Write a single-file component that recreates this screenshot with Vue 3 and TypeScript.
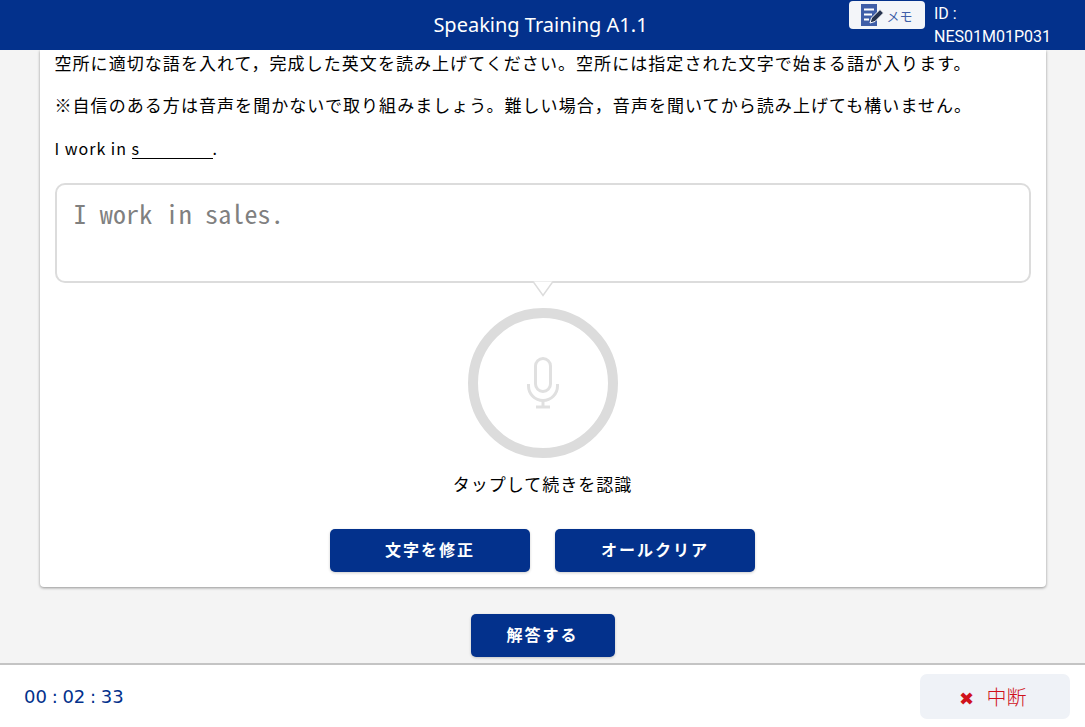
<script setup lang="ts">
import { ref } from "vue";

const title = ref("Speaking Training A1.1");
const userId = ref("NES01M01P031");
const recognized = ref("I work in sales.");
const elapsed = ref("00 : 02 : 33");
</script>

<template>
  <div class="page">
    <header class="top-bar">
      <h1 class="title">{{ title }}</h1>
      <div class="top-right">
        <button class="memo-btn">
          <svg class="memo-icon" width="23" height="22" viewBox="0 0 23 22">
            <rect x="0" y="0" width="16" height="22" fill="#3f5ea8" />
            <path d="M3 5.500h10M3 10.500h8M3 15.500h5" stroke="#fff" stroke-width="2" fill="none" />
            <path d="M9 19l1.500-5 8.500-8.500 3.500 3.500-8.500 8.500z" fill="#26334f" stroke="#fff" stroke-width="1" />
          </svg>
          <span>メモ</span>
        </button>
        <div class="user-id">ID :<br />{{ userId }}</div>
      </div>
    </header>

    <main class="content">
      <section class="card">
        <p class="lead">空所に適切な語を入れて，完成した英文を読み上げてください。空所には指定された文字で始まる語が入ります。</p>
        <p class="lead">※自信のある方は音声を聞かないで取り組みましょう。難しい場合，音声を聞いてから読み上げても構いません。</p>
        <p class="lead sentence">I work in <span class="blank">s</span>.</p>

        <div class="speech-box">
          <span class="speech-text">{{ recognized }}</span>
          <svg class="speech-tail" width="20" height="17" viewBox="0 0 20 17">
            <path d="M0 1.500L10 15.500L20 1.500" fill="#fff" stroke="#dcdcdc" stroke-width="1.500" />
          </svg>
        </div>

        <div class="mic-circle">
          <svg width="32" height="52" viewBox="0 0 32 52" fill="none" stroke="#e0e0e0" stroke-width="3">
            <rect x="8.500" y="1.500" width="15" height="33" rx="7.500" />
            <path d="M1.500 27v2a14.500 14.500 0 0 0 29 0v-2" />
            <path d="M16 43v6" />
            <path d="M9 50h14" />
          </svg>
        </div>
        <p class="mic-label">タップして続きを認識</p>

        <div class="card-actions">
          <button class="primary-btn wide">文字を修正</button>
          <button class="primary-btn wide">オールクリア</button>
        </div>
      </section>

      <div class="answer-row">
        <button class="primary-btn answer">解答する</button>
      </div>
    </main>

    <footer class="bottom-bar">
      <span class="timer">{{ elapsed }}</span>
      <button class="stop-btn"><span class="stop-x">✖</span>中断</button>
    </footer>
  </div>
</template>

<style>
html,
body {
  margin: 0;
  background: #fff;
}
</style>

<style scoped>
.page {
  width: 1085px;
  height: 727px;
  display: flex;
  flex-direction: column;
  overflow: hidden;
  font-family: "Noto Sans CJK JP", "Noto Sans", sans-serif;
  color: #000;
}

.top-bar {
  height: 50px;
  flex: none;
  background: #03318c;
  color: #fff;
  position: relative;
  display: flex;
  align-items: center;
  justify-content: center;
}

.title {
  margin: 0;
  padding: 0 4px 2px 0;
  font-family: "Noto Sans", sans-serif;
  font-size: 20px;
  font-weight: 400;
}

.top-right {
  position: absolute;
  left: 849px;
  top: 0;
  display: flex;
  gap: 9px;
}

.memo-btn {
  width: 76px;
  height: 28px;
  margin-top: 1px;
  padding: 0;
  border: none;
  border-radius: 4px;
  background: #f3f5f9;
  color: #3f5ea8;
  font: 400 13px "Noto Sans CJK JP", sans-serif;
  display: flex;
  align-items: center;
  justify-content: center;
  gap: 2px;
}

.user-id {
  font-family: "Roboto", sans-serif;
  font-size: 16px;
  line-height: 23px;
  margin-top: 2px;
}

.content {
  flex: 1;
  background: #f4f4f4;
  display: flex;
  flex-direction: column;
  align-items: center;
}

.card {
  width: 976px;
  height: 537px;
  padding: 0 15px;
  background: #fff;
  border-radius: 0 0 4px 4px;
  box-shadow: 0 1px 3px rgba(0, 0, 0, 0.4);
}

.lead {
  margin: 0 0 18px;
  padding-top: 2px;
  font-size: 17px;
  line-height: 22px;
  letter-spacing: 1.060px;
}

.sentence {
  margin-bottom: 24px;
  padding-top: 3px;
  font-size: 16px;
  letter-spacing: 1px;
}

.blank {
  display: inline-block;
  width: 81px;
  border-bottom: 1px solid #000;
  line-height: 19px;
}

.speech-box {
  height: 96px;
  border: 2px solid #dcdcdc;
  border-radius: 10px;
  position: relative;
  padding: 0 17px;
}

.speech-text {
  font-family: "Noto Sans Mono CJK JP", "DejaVu Sans Mono", monospace;
  font-size: 26px;
  font-weight: 300;
  letter-spacing: 0.150px;
  line-height: 56px;
  color: #808080;
}

.speech-tail {
  position: absolute;
  left: 476px;
  bottom: -16px;
}

.mic-circle {
  width: 130px;
  height: 130px;
  margin: 25px auto 0;
  border: 10px solid #dcdcdc;
  border-radius: 50%;
  display: flex;
  align-items: center;
  justify-content: center;
}

.mic-label {
  margin: 15px 0 0;
  text-align: center;
  font-size: 17px;
  line-height: 22px;
  letter-spacing: 1px;
}

.card-actions {
  display: flex;
  justify-content: center;
  gap: 25px;
  margin-top: 34px;
}

.primary-btn {
  height: 43px;
  padding: 0 0 3px;
  border: none;
  border-radius: 5px;
  background: #03318c;
  color: #fff;
  font: 700 16px "Noto Sans CJK JP", sans-serif;
  letter-spacing: 2px;
  box-shadow: 0 1px 3px rgba(0, 0, 0, 0.2);
}

.wide {
  width: 200px;
}

.answer {
  width: 144px;
}

.answer-row {
  margin-top: 27px;
}

.bottom-bar {
  height: 64px;
  box-sizing: border-box;
  flex: none;
  border-top: 2px solid #c4c4c4;
  background: #fff;
  display: flex;
  align-items: flex-start;
  justify-content: space-between;
  padding: 9px 15px 0 24px;
}

.timer {
  color: #03318c;
  font-family: "DejaVu Sans", sans-serif;
  font-size: 18px;
  word-spacing: -1px;
  line-height: 46px;
}

.stop-btn {
  width: 150px;
  height: 45px;
  padding: 0 5px 0 0;
  border: none;
  border-radius: 7px;
  background: #eff2f7;
  color: #d0121b;
  font: 300 20px "Noto Sans CJK JP", sans-serif;
}

.stop-x {
  font-size: 18px;
  margin-right: 13px;
  font-family: "DejaVu Sans", sans-serif;
}
</style>
